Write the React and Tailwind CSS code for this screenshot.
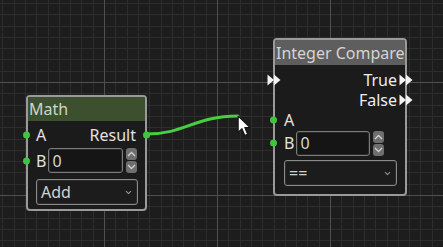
import React from 'react';

const FONT = { fontFamily: '"Noto Sans", "Open Sans", sans-serif' };

// canvas grid: minor every 11.3px, major every 10 minors
const STEP = 11.3;
const gridX = Array.from({ length: 40 }, (_, k) => ({ p: 2.3 + k * STEP, major: k % 10 === 9 }));
const gridY = Array.from({ length: 22 }, (_, k) => ({ p: 2.9 + k * STEP, major: k % 10 === 7 }));

const Grid = () => (
  <svg className="absolute inset-0" width="443" height="247">
    {gridX.filter(l => !l.major).map((l, i) => (
      <line key={'vx' + i} x1={Math.round(l.p) + 0.5} x2={Math.round(l.p) + 0.5} y1="0" y2="247" stroke="#2d2d2d" />
    ))}
    {gridY.filter(l => !l.major).map((l, i) => (
      <line key={'hy' + i} y1={Math.round(l.p) + 0.5} y2={Math.round(l.p) + 0.5} x1="0" x2="443" stroke="#2d2d2d" />
    ))}
    {gridX.filter(l => l.major).map((l, i) => (
      <line key={'mx' + i} x1={Math.round(l.p) + 0.5} x2={Math.round(l.p) + 0.5} y1="0" y2="247" stroke="#4f4f4f" />
    ))}
    {gridY.filter(l => l.major).map((l, i) => (
      <line key={'my' + i} y1={Math.round(l.p) + 0.5} y2={Math.round(l.p) + 0.5} x1="0" x2="443" stroke="#4f4f4f" />
    ))}
  </svg>
);

const Port = ({ side }) => (
  <span
    className={`absolute top-1/2 -translate-y-1/2 w-[7px] h-[7px] rounded-full bg-[#3fc43f] ${side === 'left' ? '-left-[5px]' : '-right-[5px]'}`}
  />
);

const ExecArrow = ({ side }) => (
  <svg
    className={`absolute top-1/2 -translate-y-1/2 ${side === 'left' ? '-left-[8px]' : '-right-[8px]'}`}
    width="14" height="12" viewBox="0 0 14 12"
  >
    <path d="M0.5 0.5 L7 6 L0.5 11.5 Z" fill="#f2f2f2" />
    <path d="M7 0.5 L13.5 6 L7 11.5 Z" fill="#f2f2f2" />
  </svg>
);

const Chevron = ({ up }) => (
  <svg width="9" height="6" viewBox="0 0 9 6">
    <path d={up ? 'M1 5 L4.5 1.5 L8 5' : 'M1 1 L4.5 4.5 L8 1'} fill="none" stroke="#cfcfcf" strokeWidth="1.4" />
  </svg>
);

const SpinBox = ({ width }) => (
  <div className="flex items-center gap-[3px]">
    <div className={`${width} h-[25px] border border-[#7c7c7c] rounded-[3px] bg-[#151515] flex items-center px-[3px] text-[16px] text-[#d6d6d6] shadow-[inset_0_0_0_1px_#2a2a2a]`}>
      0
    </div>
    <div className="flex flex-col gap-[1px]">
      <div className="w-[11px] h-[12px] rounded-[3px] bg-[#6e6e6e] flex items-center justify-center"><Chevron up /></div>
      <div className="w-[11px] h-[12px] rounded-[3px] bg-[#6e6e6e] flex items-center justify-center"><Chevron /></div>
    </div>
  </div>
);

const Dropdown = ({ label, width }) => (
  <div className={`${width} h-[26px] border border-[#8a8a8a] rounded-[3px] bg-[#1c1c1c] flex items-center justify-between pl-[4px] pr-[5px] text-[16px] text-[#d2d2d2] shadow-[inset_0_0_0_1px_#2c2c2c]`}>
    <span className="leading-none">{label}</span>
    <svg width="7" height="5" viewBox="0 0 7 5">
      <path d="M1 1.2 L3.5 3.6 L6 1.2" fill="none" stroke="#9a9a9a" strokeWidth="1.1" />
    </svg>
  </div>
);

const MathNode = () => (
  <div className="absolute left-[26px] top-[95px] w-[121px] h-[116px] rounded-[4px] border-2 border-[#9a9a9a] bg-[#1b1b1b] flex flex-col">
    <div className="h-[24px] bg-[#3c4f2f] rounded-t-[2px] flex items-center pl-[1px] text-[16px] text-[#cfd6c6] leading-none">
      Math
    </div>
    <div className="relative h-[27px] flex items-center justify-between pl-[8px] pr-[9px] text-[16px] text-[#e2e2e2]">
      <Port side="left" />
      <span>A</span>
      <span>Result</span>
      <Port side="right" />
    </div>
    <div className="relative h-[25px] flex items-center pl-[8px] gap-[2px] text-[16px] text-[#e2e2e2]">
      <Port side="left" />
      <span>B</span>
      <SpinBox width="w-[75px]" />
    </div>
    <div className="pl-[8px] pt-[6px]">
      <Dropdown label="Add" width="w-[102px]" />
    </div>
  </div>
);

const CompareNode = () => (
  <div className="absolute left-[273px] top-[38px] w-[134px] h-[158px] rounded-[4px] border-2 border-[#9a9a9a] bg-[#1b1b1b] flex flex-col">
    <div className="h-[25px] bg-[#5e5e5e] rounded-t-[2px] flex items-center pl-[1px] text-[16px] text-[#d4d4d4] leading-none whitespace-nowrap overflow-hidden">
      Integer Compare
    </div>
    <div className="relative h-[21px] mt-[4px] flex items-center justify-end pr-[8px] text-[16px] text-[#ededed]">
      <ExecArrow side="left" />
      <span>True</span>
      <ExecArrow side="right" />
    </div>
    <div className="relative h-[20px] flex items-center justify-end pr-[8px] text-[16px] text-[#ededed]">
      <span>False</span>
      <ExecArrow side="right" />
    </div>
    <div className="relative h-[20px] flex items-center pl-[9px] text-[16px] text-[#e2e2e2]">
      <Port side="left" />
      <span>A</span>
    </div>
    <div className="relative h-[26px] flex items-center pl-[9px] gap-[2px] text-[16px] text-[#e2e2e2]">
      <Port side="left" />
      <span>B</span>
      <SpinBox width="w-[74px]" />
    </div>
    <div className="pl-[9px] pt-[4px]">
      <Dropdown label="==" width="w-[113px]" />
    </div>
  </div>
);

const Wire = () => (
  <svg className="absolute inset-0 pointer-events-none" width="443" height="247">
    <path d="M147 134 C 185 134, 195 116, 238 116" fill="none" stroke="#47cf3f" strokeWidth="3" strokeLinecap="round" />
  </svg>
);

const Cursor = () => (
  <svg className="absolute left-[237px] top-[115px]" width="17" height="23" viewBox="0 0 16 22">
    <path d="M1 1 L1 16.5 L4.6 13 L7.4 19.6 L10 18.5 L7.3 12 L12.3 12 Z" fill="#ffffff" stroke="#111111" strokeWidth="1" strokeLinejoin="round" />
  </svg>
);

const App = () => {
  return (
    <div className="relative w-[443px] h-[247px] overflow-hidden bg-[#1d1d1d]" style={FONT}>
      <Grid />
      <Wire />
      <MathNode />
      <CompareNode />
      <Cursor />
    </div>
  );
};

export default App;
